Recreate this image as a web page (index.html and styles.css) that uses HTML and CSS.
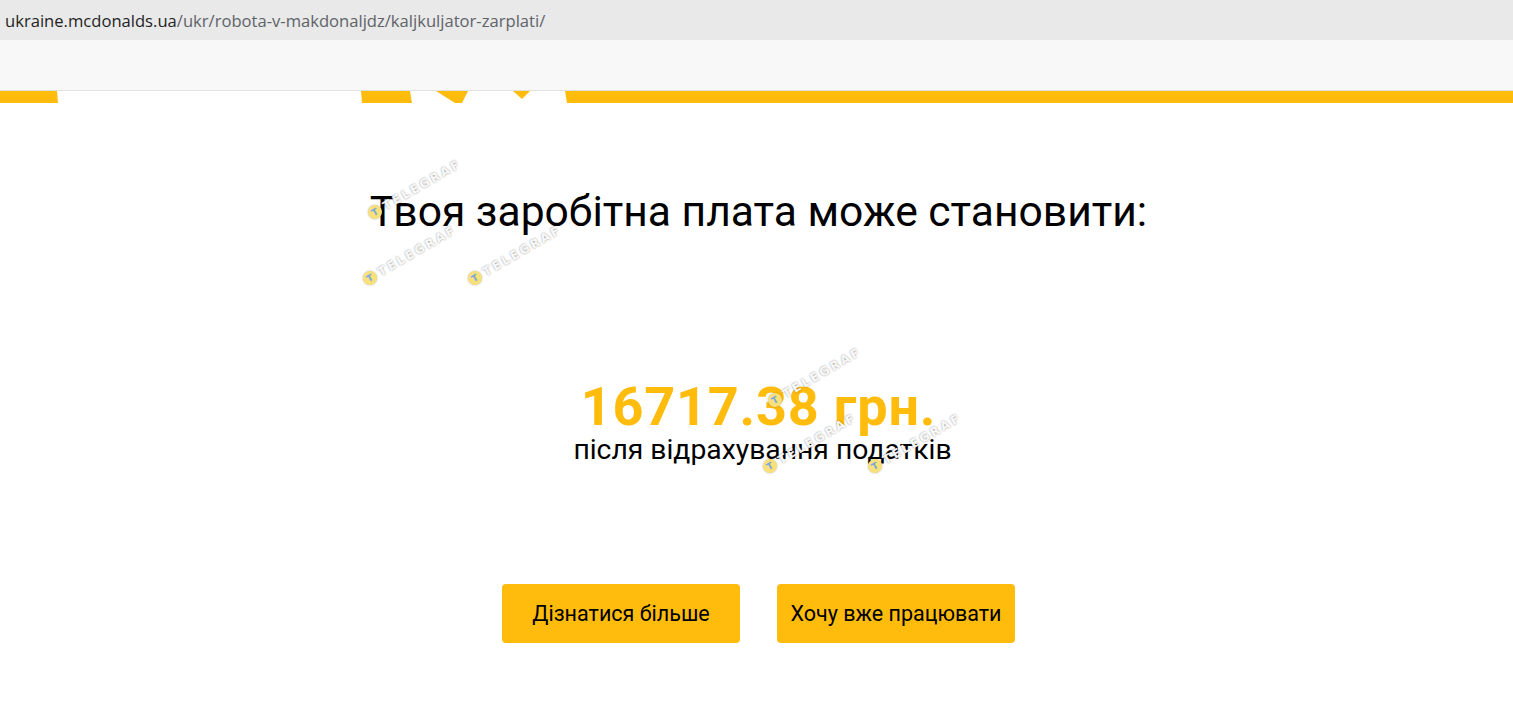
FILE: index.html
```html
<!DOCTYPE html>
<html lang="uk">
<head>
<meta charset="utf-8">
<title>Калькулятор зарплати</title>
<link rel="stylesheet" href="styles.css">
</head>
<body>
<div class="addressbar"><span class="host">ukraine.mcdonalds.ua</span><span class="path">/ukr/robota-v-makdonaljdz/kaljkuljator-zarplati/</span></div>
<div class="toolbar"></div>
<div class="strip">
  <svg width="1513" height="12" viewBox="0 0 1513 12" preserveAspectRatio="none">
    <polygon fill="#ffbc0d" points="0,0 57,0 58,12 0,12"/>
    <polygon fill="#ffbc0d" points="361,0 410,0 412,12 362,12"/>
    <polygon fill="#ffbc0d" points="436,0 468,0 462,12 455,12"/>
    <polygon fill="#ffbc0d" points="513,0 530,0 522,8"/>
    <polygon fill="#ffbc0d" points="565,0 1513,0 1513,12 567,12"/>
  </svg>
</div>
<main class="result">
  <h1 class="title">Твоя заробітна плата може становити:</h1>
  <div class="amount">16717.38 грн.</div>
  <div class="note">після відрахування податків</div>
  <div class="actions">
    <a class="btn" href="#">Дізнатися більше</a>
    <a class="btn" href="#">Хочу вже працювати</a>
  </div>
</main>
<div class="wm" style="left:368px;top:205px"><span class="dot"><span class="t">T</span></span>TELEGRAF</div>
<div class="wm" style="left:363px;top:271px"><span class="dot"><span class="t">T</span></span>TELEGRAF</div>
<div class="wm" style="left:468px;top:271px"><span class="dot"><span class="t">T</span></span>TELEGRAF</div>
<div class="wm" style="left:768px;top:393px"><span class="dot"><span class="t">T</span></span>TELEGRAF</div>
<div class="wm" style="left:763px;top:459px"><span class="dot"><span class="t">T</span></span>TELEGRAF</div>
<div class="wm" style="left:868px;top:459px"><span class="dot"><span class="t">T</span></span>TELEGRAF</div>
</body>
</html>
```
FILE: styles.css
```css
html, body {
  margin: 0;
  padding: 0;
  background: #fff;
}
body {
  font-family: Roboto, "Liberation Sans", Arial, sans-serif;
  color: #000;
  width: 1513px;
  height: 703px;
  overflow: hidden;
  position: relative;
}
.addressbar {
  height: 40px;
  background: #e8e9e8;
  display: flex;
  align-items: center;
  padding-left: 5px;
  font-family: "Open Sans", "Noto Sans", sans-serif;
  font-size: 16.6px;
}
.host { color: #1f1f1f; }
.path { color: #5f6368; }
.toolbar {
  height: 50px;
  background: #f8f8f8;
  border-bottom: 1px solid #e0e0e0;
}
.strip {
  height: 12px;
  line-height: 0;
}
.strip svg { display: block; }
.result {
  display: flex;
  flex-direction: column;
  align-items: center;
  padding-left: 4px;
}
.title {
  margin: 80px 0 0;
  font-size: 42.6px;
  font-weight: 400;
  line-height: 56px;
}
.amount {
  margin-top: 145px;
  font-size: 54px;
  font-weight: 700;
  color: #ffbc0d;
  line-height: 46px;
  letter-spacing: 0.8px;
}
.note {
  font-size: 28.3px;
  line-height: 32px;
  margin-top: 4px;
  padding-left: 8px;
}
.actions {
  margin-top: 118px;
  display: flex;
  gap: 37px;
}
.btn {
  width: 238px;
  height: 59px;
  display: flex;
  align-items: center;
  justify-content: center;
  background: #ffbc0d;
  border-radius: 4px;
  color: #000;
  text-decoration: none;
  font-size: 21.5px;
}
.wm {
  position: absolute;
  display: flex;
  align-items: center;
  gap: 3px;
  transform: rotate(-30deg);
  transform-origin: 7px 7px;
  font-family: "DejaVu Sans", sans-serif;
  font-size: 12px;
  font-weight: 700;
  letter-spacing: 2.5px;
  color: rgba(255, 255, 255, 0.95);
  text-shadow: 0 0 2px rgba(0, 0, 0, 0.45);
  pointer-events: none;
}
.dot {
  width: 14px;
  height: 14px;
  border-radius: 50%;
  background: #f8e07a;
  box-shadow: 0 0 2px rgba(0, 0, 0, 0.3);
  display: flex;
  align-items: center;
  justify-content: center;
}
.t {
  font-size: 9px;
  letter-spacing: 0;
  color: #7aa6e0;
  text-shadow: none;
}
```
